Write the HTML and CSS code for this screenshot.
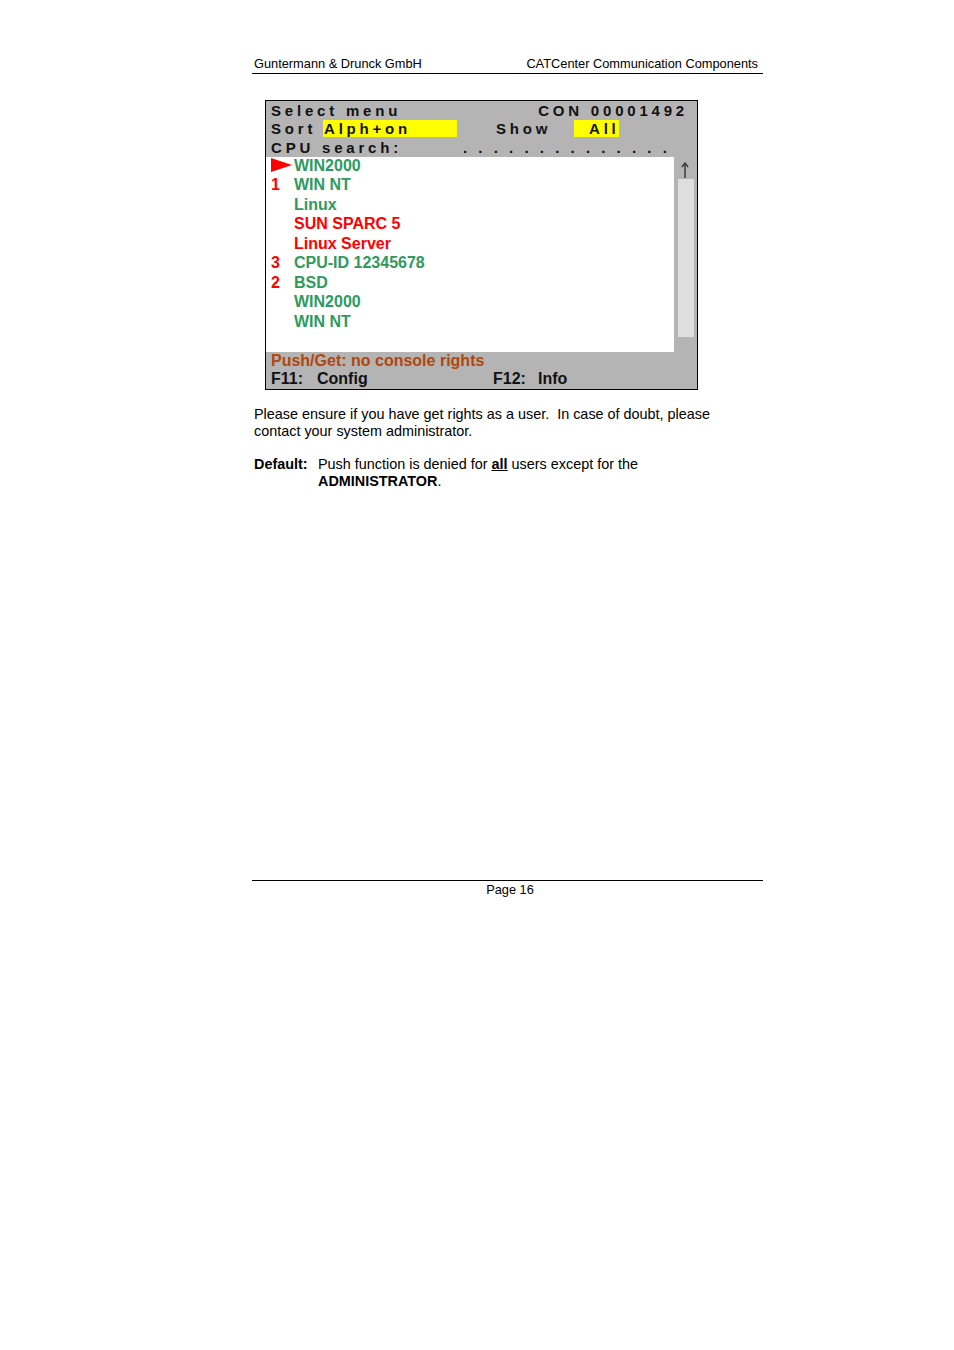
FILE: index.html
```html
<!DOCTYPE html>
<html>
<head>
<meta charset="utf-8">
<link rel="stylesheet" href="styles.css">
</head>
<body>
<div class="page">
  <header class="hdr"><span>Guntermann &amp; Drunck GmbH</span><span>CATCenter Communication Components</span></header>

  <div class="screen">
    <div class="trow r1"><span class="sp">Select menu</span><span class="sp">CON 00001492</span></div>
    <div class="trow r2"><span class="sp lbl-sort">Sort</span><span class="sp yel yel1">Alph+on</span><span class="sp lbl-show">Show</span><span class="sp yel yel2">All</span></div>
    <div class="trow r3"><span class="sp lbl-cpu">CPU search:</span><span class="dots"><i>.</i><i>.</i><i>.</i><i>.</i><i>.</i><i>.</i><i>.</i><i>.</i><i>.</i><i>.</i><i>.</i><i>.</i><i>.</i><i>.</i></span></div>
    <div class="mid">
      <div class="list">
        <div class="item"><span class="num"><svg class="tri" width="21" height="14" viewBox="0 0 21 14"><polygon points="0,0 21,7 0,14" fill="#ff0000"/></svg></span><span class="g">WIN2000</span></div>
        <div class="item"><span class="num">1</span><span class="g">WIN NT</span></div>
        <div class="item"><span class="num"></span><span class="g">Linux</span></div>
        <div class="item"><span class="num"></span><span class="r">SUN SPARC 5</span></div>
        <div class="item"><span class="num"></span><span class="r">Linux Server</span></div>
        <div class="item"><span class="num">3</span><span class="g">CPU-ID 12345678</span></div>
        <div class="item"><span class="num">2</span><span class="g">BSD</span></div>
        <div class="item"><span class="num"></span><span class="g">WIN2000</span></div>
        <div class="item"><span class="num"></span><span class="g">WIN NT</span></div>
      </div>
      <div class="scroll">
        <svg class="arrow" width="10" height="16" viewBox="0 0 10 16"><line x1="5" y1="1.5" x2="5" y2="16" stroke="#333" stroke-width="1.4"/><polyline points="1.8,5.2 5,1 8.2,5.2" fill="none" stroke="#333" stroke-width="1.3"/></svg>
        <div class="track"></div>
      </div>
    </div>
    <div class="status">Push/Get: no console rights</div>
    <div class="keys"><span class="kcell"><span class="k">F11:</span>Config</span><span class="kcell"><span class="k k2">F12:</span>Info</span></div>
  </div>

  <p class="para">Please ensure if you have get rights as a user.&nbsp; In case of doubt, please contact your system administrator.</p>

  <div class="default">
    <span class="dlabel">Default:</span>
    <span class="dtext">Push function is denied for <b class="u">all</b> users except for the <b>ADMINISTRATOR</b>.</span>
  </div>

  <footer class="ftr">Page 16</footer>
</div>
</body>
</html>
```

FILE: styles.css
```css
html, body {
  margin: 0;
  padding: 0;
  background: #ffffff;
}
body {
  font-family: "Liberation Sans", Arial, sans-serif;
  color: #000;
}
.page {
  margin-left: 252px;
  width: 511px;
  padding-top: 56px;
}
.hdr {
  display: flex;
  justify-content: space-between;
  font-size: 12.8px;
  line-height: 15px;
  padding: 0 5px 2px 2px;
  border-bottom: 1px solid #000;
}
.screen {
  margin-top: 26px;
  margin-left: 13px;
  width: 431px;
  border: 1px solid #000;
  background: #b4b4b4;
  font-weight: bold;
  color: #111;
}
.trow {
  height: 18.5px;
  display: flex;
  align-items: center;
  padding-left: 5px;
  font-size: 15px;
}
.sp {
  letter-spacing: 3.8px;
  white-space: pre;
  line-height: 17px;
}
.r1 {
  justify-content: space-between;
  padding-right: 9px;
}
.lbl-sort {
  width: 52px;
}
.yel {
  background: #ffff00;
  height: 17px;
}
.yel1 {
  width: 133px;
  padding-left: 1px;
}
.lbl-show {
  margin-left: 39px;
  width: 78px;
}
.yel2 {
  width: 30px;
  padding-left: 15px;
}
.lbl-cpu {
  width: 192px;
}
.dots {
  display: flex;
  justify-content: space-between;
  width: 204px;
  line-height: 17px;
}
.dots i {
  font-style: normal;
}
.mid {
  display: flex;
  height: 195px;
}
.list {
  width: 408px;
  background: #fff;
  padding-left: 5px;
  box-sizing: border-box;
}
.item {
  display: grid;
  grid-template-columns: 23px 1fr;
  font-size: 16px;
  line-height: 19.5px;
  height: 19.5px;
}
.item:first-child {
  margin-top: -1px;
}
.num {
  color: #ff0000;
}
.tri {
  display: block;
  margin-top: 2.5px;
}
.g {
  color: #2e9a5e;
}
.r {
  color: #ff0000;
}
.scroll {
  width: 23px;
  display: flex;
  flex-direction: column;
}
.arrow {
  display: block;
  margin-top: 5px;
  margin-left: 6px;
}
.track {
  margin-top: 1.5px;
  margin-left: 4px;
  width: 16px;
  height: 158px;
  background: #dedede;
}
.status {
  font-size: 16px;
  line-height: 17px;
  height: 17px;
  padding-left: 5px;
  color: #b3450e;
}
.keys {
  display: flex;
  font-size: 16px;
  line-height: 19px;
  height: 20px;
  padding-left: 5px;
}
.kcell {
  flex: 0 0 222px;
  display: flex;
}
.k {
  width: 46px;
}
.k2 {
  width: 45px;
}
.para {
  margin: 16.5px 0 0 0;
  padding-left: 2px;
  width: 462px;
  font-size: 14.4px;
  line-height: 17px;
}
.default {
  margin-top: 16px;
  padding-left: 2px;
  display: grid;
  grid-template-columns: 64px 1fr;
  font-size: 14.4px;
  line-height: 17px;
}
.dlabel {
  font-weight: bold;
}
.dtext {
  width: 360px;
}
.u {
  text-decoration: underline;
}
.ftr {
  margin-top: 390px;
  border-top: 1px solid #000;
  text-align: center;
  padding-left: 5px;
  font-size: 12.8px;
  line-height: 15px;
  padding-top: 1px;
}
```
